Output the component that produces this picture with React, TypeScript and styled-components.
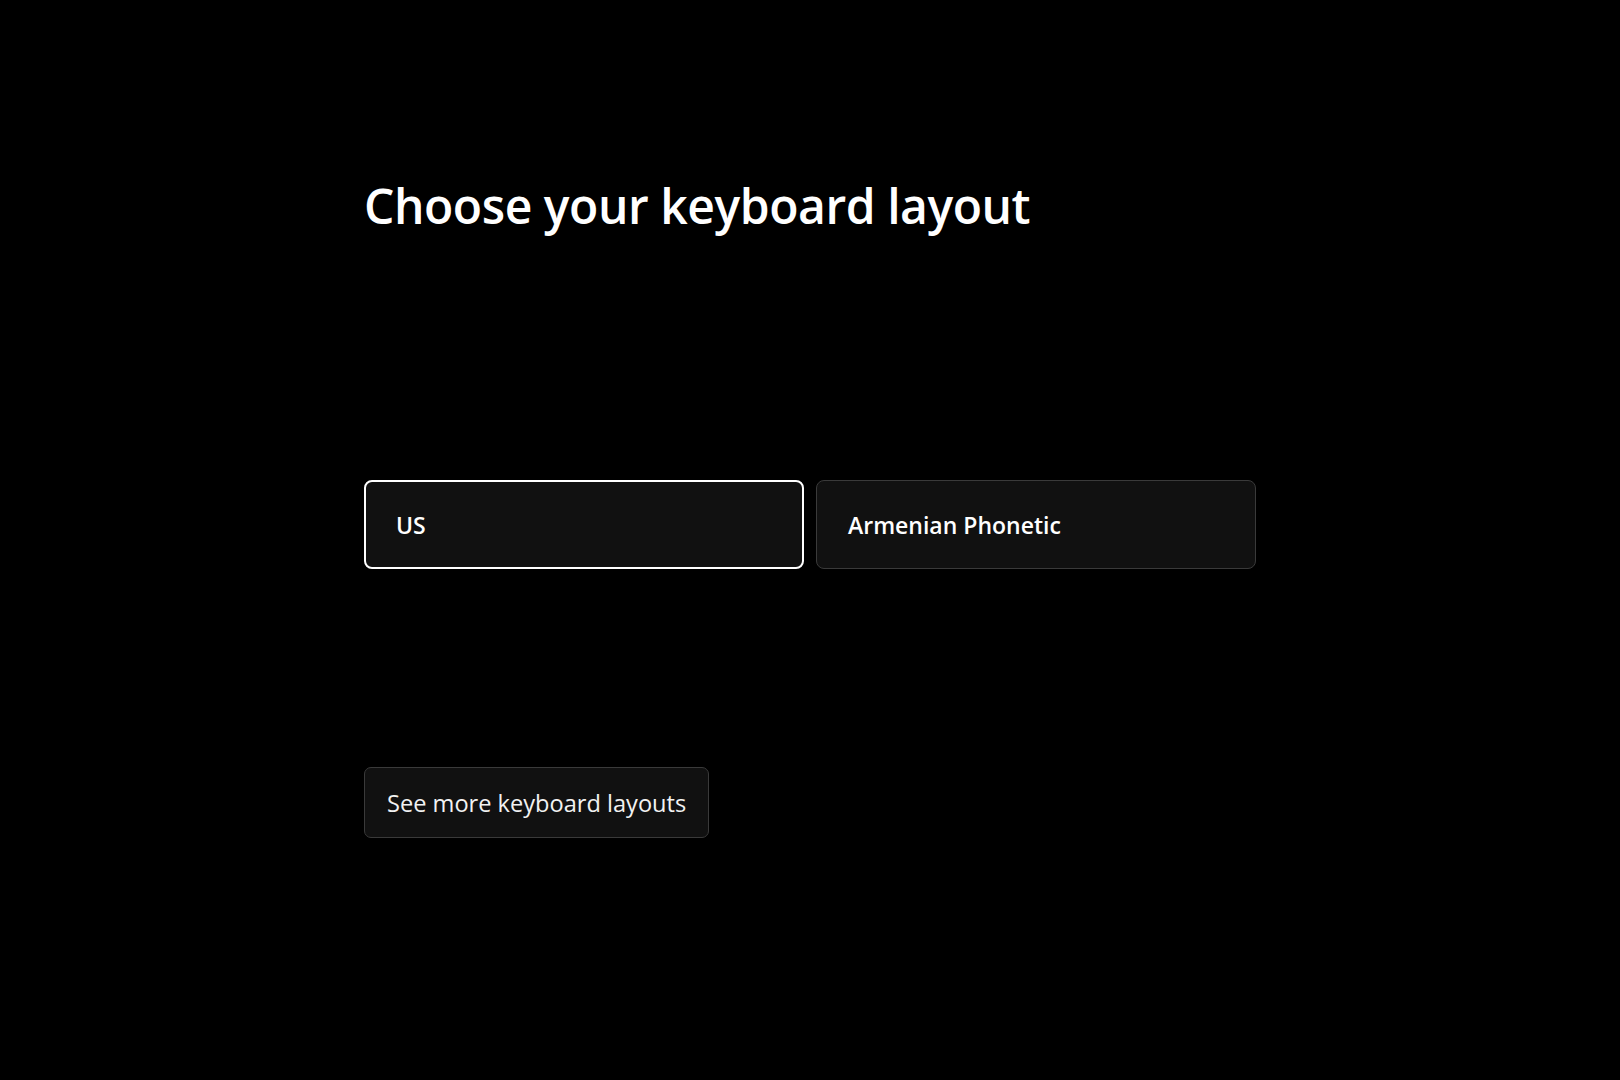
import styled, { createGlobalStyle } from 'styled-components';

const GlobalStyle = createGlobalStyle`
    html, body {
        margin: 0;
        padding: 0;
        background: #000;
    }
    body {
        font-family: "Open Sans", "Noto Sans", sans-serif;
        color: #fff;
    }
`;

const Page = styled.main`
    width: 1620px;
    height: 1080px;
    box-sizing: border-box;
    padding: 172px 0 0 364px;
    display: flex;
    flex-direction: column;
`;

const Title = styled.h1`
    margin: 0;
    font-size: 48px;
    font-weight: 600;
    line-height: 68px;
    letter-spacing: -0.45px;
`;

const Options = styled.div`
    margin-top: 240px;
    display: flex;
    gap: 12px;
`;

const Option = styled.button<{ $selected?: boolean }>`
    width: 440px;
    height: 89px;
    box-sizing: border-box;
    display: flex;
    align-items: center;
    padding: 0 0 0 ${(p) => (p.$selected ? '30px' : '31px')};
    background: #111111;
    border: ${(p) => (p.$selected ? '2.5px solid #ffffff' : '1px solid #3a3a3a')};
    border-radius: 8px;
    color: #fff;
    font-family: inherit;
    font-size: 23px;
    font-weight: 600;
    cursor: pointer;
`;

const MoreButton = styled.button`
    margin-top: 198px;
    align-self: flex-start;
    height: 71px;
    box-sizing: border-box;
    padding: 0 22px;
    background: #111111;
    border: 1px solid #3a3a3a;
    border-radius: 7px;
    color: #f2f2f2;
    font-family: inherit;
    font-size: 23.6px;
    font-weight: 400;
    cursor: pointer;
`;

export default function App() {
    return (
        <>
            <GlobalStyle />
            <Page>
                <Title>Choose your keyboard layout</Title>
                <Options>
                    <Option $selected>US</Option>
                    <Option>Armenian Phonetic</Option>
                </Options>
                <MoreButton>See more keyboard layouts</MoreButton>
            </Page>
        </>
    );
}
